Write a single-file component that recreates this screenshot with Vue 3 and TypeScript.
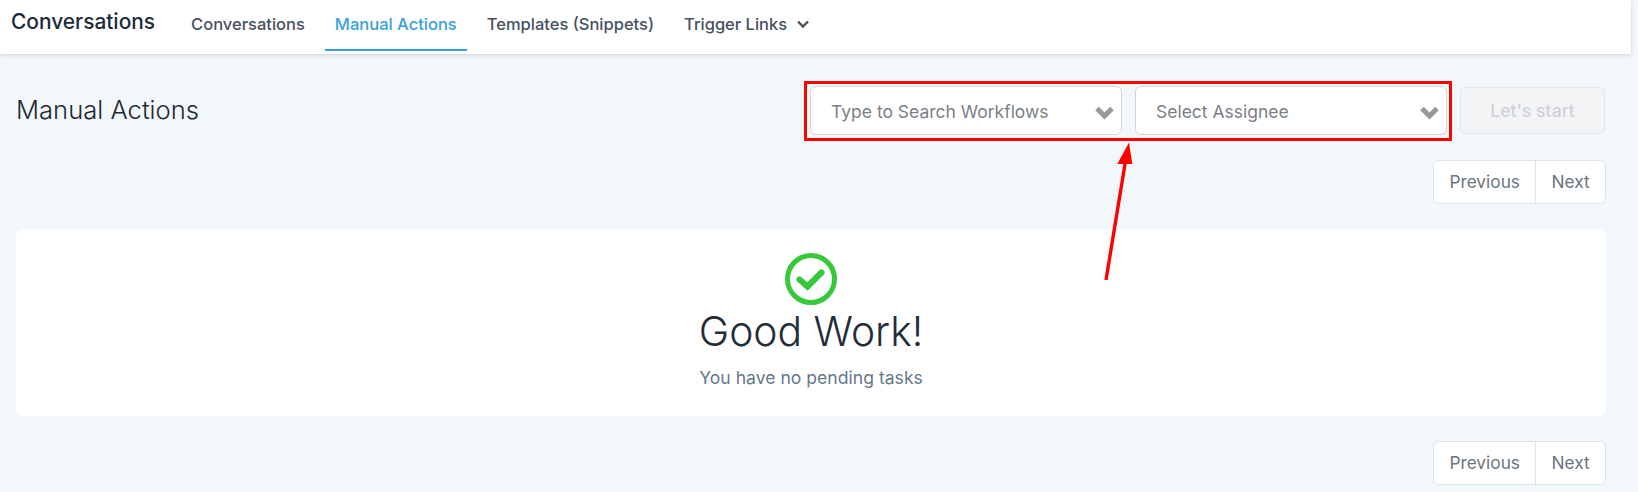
<script setup lang="ts">
const tabs = [
  { label: 'Conversations', active: false },
  { label: 'Manual Actions', active: true },
  { label: 'Templates (Snippets)', active: false },
  { label: 'Trigger Links', active: false, menu: true },
];
const filters = ['Type to Search Workflows', 'Select Assignee'];
</script>

<template>
  <div class="page">
    <header class="topbar">
      <h1 class="brand">Conversations</h1>
      <nav class="tabs">
        <a v-for="tab in tabs" :key="tab.label" class="tab" :class="{ active: tab.active }">
          {{ tab.label }}
          <svg v-if="tab.menu" class="tab-caret" width="14" height="10" viewBox="0 0 14 10">
            <polyline points="2,2.5 7,7.5 12,2.5" fill="none" stroke="#47515f" stroke-width="2.4" />
          </svg>
        </a>
      </nav>
    </header>

    <main class="content">
      <div class="toolbar">
        <h2 class="title">Manual Actions</h2>
        <div class="filters">
          <div class="highlight">
            <div v-for="f in filters" :key="f" class="select">
              <span>{{ f }}</span>
              <svg class="caret" width="21" height="16" viewBox="0 0 21 16">
                <polyline points="3,3.5 10.5,11 18,3.5" fill="none" stroke="#999" stroke-width="5" />
              </svg>
            </div>
          </div>
          <button class="start" disabled>Let's start</button>
        </div>
      </div>

      <div class="pager-row first">
        <div class="pager">
          <button>Previous</button>
          <button>Next</button>
        </div>
      </div>

      <section class="card">
        <svg class="ok" width="52" height="52" viewBox="0 0 52 52">
          <circle cx="26" cy="26" r="23.5" fill="none" stroke="#37c83c" stroke-width="5" />
          <polyline points="14.5,26.5 22.5,33.5 36.5,19.5" fill="none" stroke="#37c83c" stroke-width="6.2" stroke-linecap="round" />
        </svg>
        <h3>Good Work!</h3>
        <p>You have no pending tasks</p>
      </section>

      <div class="pager-row last">
        <div class="pager">
          <button>Previous</button>
          <button>Next</button>
        </div>
      </div>
    </main>

    <!-- annotation arrow -->
    <svg class="arrow" width="40" height="150" viewBox="0 0 40 150">
      <line x1="8" y1="142" x2="28" y2="20" stroke="#f00" stroke-width="3.4" />
      <polygon points="31,4.5 34.3,26 19.3,26" fill="#f00" />
    </svg>
  </div>
</template>

<style scoped>
.page {
  position: relative;
  width: 1638px;
  height: 492px;
  overflow: hidden;
  background: #f2f7fa;
  font-family: Inter, "Liberation Sans", sans-serif;
}
.topbar {
  display: flex;
  align-items: stretch;
  width: 1631px;
  height: 54px;
  box-sizing: border-box;
  padding-left: 11px;
  background: #fff;
  box-shadow: 0 1px 4px rgba(60, 70, 80, 0.22);
}
.brand {
  margin: 0 26px 0 0;
  padding-top: 9px;
  font-size: 20.9px;
  line-height: 26px;
  font-weight: 500;
  color: #202b3a;
}
.tabs {
  display: flex;
  gap: 10px;
}
.tab {
  display: flex;
  align-items: center;
  gap: 9px;
  height: 51px;
  padding: 0 10px 2px;
  box-sizing: border-box;
  font-size: 16.5px;
  font-weight: 500;
  color: #47515f;
  border-bottom: 2px solid transparent;
}
.tab.active {
  color: #37a0dc;
  border-bottom-color: #37a0dc;
}
.content {
  padding: 27px 32px 0 16px;
}
.toolbar {
  display: flex;
  align-items: center;
  justify-content: space-between;
  height: 60px;
}
.title {
  margin: 0 0 4px;
  font-size: 25.6px;
  font-weight: 300;
  color: #1f2933;
}
.filters {
  display: flex;
  align-items: center;
  gap: 8px;
}
.highlight {
  display: flex;
  gap: 13px;
  padding: 2px 2px 3px 3px;
  border: 3px solid #f00;
}
.select {
  display: flex;
  align-items: center;
  justify-content: space-between;
  width: 312px;
  height: 49px;
  box-sizing: border-box;
  padding: 2px 6px 0 20px;
  background: #fff;
  border: 1px solid #cfd6e0;
  border-radius: 6px;
  font-size: 17.5px;
  color: #7b7f88;
}
.caret {
  margin-top: 3px;
}
.start {
  width: 145px;
  height: 47px;
  margin: 0 1px 2px 0;
  background: #f3f4f6;
  border: 1px solid #e3e6ea;
  border-radius: 5px;
  font: inherit;
  font-size: 17.6px;
  font-weight: 500;
  color: #d0d3d8;
}
.pager-row {
  display: flex;
  justify-content: flex-end;
}
.pager-row.first {
  margin-top: 19px;
}
.pager-row.last {
  margin-top: 25px;
}
.pager {
  display: flex;
  height: 44px;
  box-sizing: border-box;
  background: #fff;
  border: 1px solid #dfe3e8;
  border-radius: 6px;
}
.pager button {
  padding: 0 15.3px 2px;
  background: none;
  border: 0;
  font: inherit;
  font-size: 17.3px;
  color: #6b7580;
}
.pager button + button {
  border-left: 1px solid #dfe3e8;
}
.card {
  display: flex;
  flex-direction: column;
  align-items: center;
  height: 187px;
  box-sizing: border-box;
  margin-top: 25px;
  padding-top: 24px;
  background: #fff;
  border-radius: 7px;
}
.card h3 {
  margin: 2px 0 0;
  font-size: 40.8px;
  line-height: 48px;
  font-weight: 350;
  color: #232d38;
}
.card p {
  margin: 11px 0 0;
  font-size: 17.6px;
  line-height: 24px;
  color: #66788a;
}
.arrow {
  position: absolute;
  left: 1098px;
  top: 138px;
}
</style>
